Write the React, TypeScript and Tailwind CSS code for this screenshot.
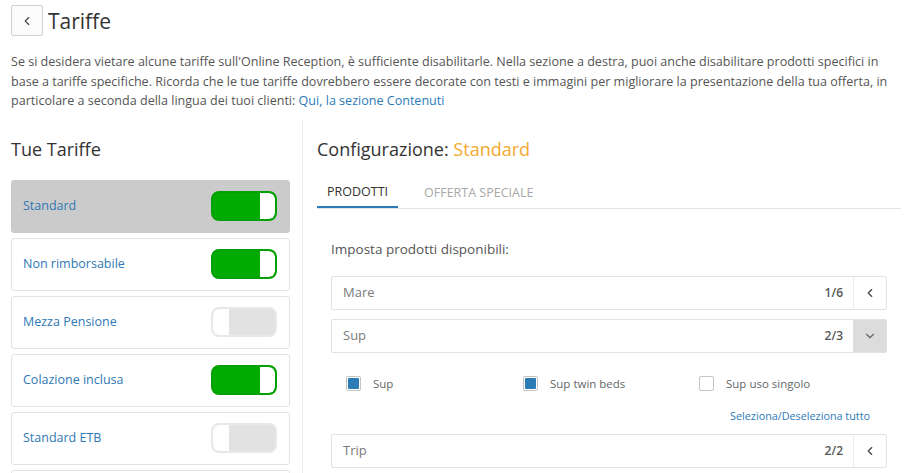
import { ChevronDown, ChevronLeft } from "lucide-react";

const rates = [
  { name: "Standard", on: true, selected: true },
  { name: "Non rimborsabile", on: true },
  { name: "Mezza Pensione", on: false },
  { name: "Colazione inclusa", on: true },
  { name: "Standard ETB", on: false },
  { name: "Standard", on: false },
];

function Toggle({ on }: { on: boolean }) {
  return on ? (
    <span className="flex h-[30px] w-[66px] justify-end overflow-hidden rounded-[8px] border-2 border-[#05a005] bg-[#02ab02]">
      <span className="h-full w-[15px] rounded-r-[6px] bg-white" />
    </span>
  ) : (
    <span className="flex h-[30px] w-[66px] overflow-hidden rounded-[8px] border-2 border-[#e8e8e8] bg-[#e2e2e2]">
      <span className="h-full w-[16px] rounded-l-[6px] bg-white" />
    </span>
  );
}

function ProductRow({ label, count, open = false }: { label: string; count: string; open?: boolean }) {
  return (
    <div className="flex h-[34px] items-stretch rounded-[2px] border border-[#e2e2e2] bg-white">
      <span className="flex flex-1 items-center pl-[11px] text-[13px] text-[#7a7a7a]">{label}</span>
      <span className="mr-[10px] flex items-center text-[12px] font-semibold text-[#555]">{count}</span>
      <span
        className={
          open
            ? "flex w-[33px] items-center justify-center bg-[#dcdcdc] text-[#666]"
            : "flex w-[33px] items-center justify-center border-l border-[#ececec] text-[#444]"
        }
      >
        {open ? <ChevronDown size={14} strokeWidth={2} /> : <ChevronLeft size={14} strokeWidth={2} />}
      </span>
    </div>
  );
}

function Check({ label, checked }: { label: string; checked: boolean }) {
  return (
    <label className="flex items-center gap-[12px] text-[11.5px] leading-[16px] text-[#666]">
      <span className="flex h-[15px] w-[15px] items-center justify-center rounded-[2px] border border-[#c4c4c4] bg-white p-[1px]">
        {checked ? <span className="h-full w-full rounded-[1px] bg-[#2b7bb5]" /> : null}
      </span>
      {label}
    </label>
  );
}

export default function App() {
  return (
    <div
      className="h-[473px] w-[904px] overflow-hidden bg-white text-[#333]"
      style={{ fontFamily: '"Open Sans", "Liberation Sans", sans-serif' }}
    >
      <header className="flex items-center gap-[5px] pl-[11px] pt-[5px]">
        <button className="flex h-[31px] w-[32px] items-center justify-center rounded-[2px] border border-[#d0d0d0] bg-[#fbfbfb] text-[#444]">
          <ChevronLeft size={14} strokeWidth={2} />
        </button>
        <h1 className="text-[21px] leading-[30px] text-[#333]">Tariffe</h1>
      </header>

      <p className="mt-[16px] px-[11px] text-[12.55px] leading-[19.5px] text-[#555]">
        Se si desidera vietare alcune tariffe sull'Online Reception, è sufficiente disabilitarle. Nella sezione a destra,
        puoi anche disabilitare prodotti specifici in base a tariffe specifiche. Ricorda che le tue tariffe dovrebbero
        essere decorate con testi e immagini per migliorare la presentazione della tua offerta, in particolare a seconda
        della lingua dei tuoi clienti: <a className="text-[#2d7ab9]">Qui, la sezione Contenuti</a>
      </p>

      <div className="mt-[10px] flex">
        <aside className="w-[302px] shrink-0 pl-[11px] pr-[12px] pt-[16px]">
          <h2 className="h-[24px] text-[18px] leading-[24px] text-[#333]">Tue Tariffe</h2>
          <ul className="mt-[19px] grid gap-[5px]">
            {rates.map((rate, i) => (
              <li
                key={i}
                className={
                  rate.selected
                    ? "flex h-[53px] items-center justify-between rounded-[3px] border border-[#cbcbcb] bg-[#cbcbcb] pl-[11px] pr-[12px]"
                    : "flex h-[53px] items-center justify-between rounded-[3px] border border-[#e3e3e3] bg-white pl-[11px] pr-[12px]"
                }
              >
                <span className="text-[12.5px] text-[#2f78b5]">{rate.name}</span>
                <Toggle on={rate.on} />
              </li>
            ))}
          </ul>
        </aside>

        <section className="flex-1 border-l border-[#ececec] pl-[14px] pr-[3px] pt-[16px]">
          <h2 className="h-[24px] text-[18px] leading-[24px] text-[#333]">
            Configurazione: <span className="text-[#f2a92f]">Standard</span>
          </h2>

          <nav className="mt-[18px] flex border-b border-[#e3e3e3] text-[12.5px]">
            <span className="-mb-px flex h-[29px] items-center border-b-2 border-[#2d7ab9] px-[10px] text-[#333]">
              PRODOTTI
            </span>
            <span className="ml-[16px] flex h-[29px] items-center px-[10px] text-[#a8a8a8]">OFFERTA SPECIALE</span>
          </nav>

          <div className="pl-[14px] pr-[14px] pt-[31px]">
            <p className="text-[13.5px] leading-[18px] text-[#555]">Imposta prodotti disponibili:</p>

            <div className="mt-[18px] grid gap-[9px]">
              <ProductRow label="Mare" count="1/6" />
              <ProductRow label="Sup" count="2/3" open />
            </div>

            <div className="mt-[23px] grid grid-cols-[177px_176px_1fr] pl-[15px]">
              <Check label="Sup" checked />
              <Check label="Sup twin beds" checked />
              <Check label="Sup uso singolo" checked={false} />
            </div>

            <div className="mt-[16px] flex justify-end pr-[17px]">
              <a className="text-[10.8px] leading-[16px] text-[#2d7ab9]">Seleziona/Deseleziona tutto</a>
            </div>

            <div className="mt-[10px]">
              <ProductRow label="Trip" count="2/2" />
            </div>
          </div>
        </section>
      </div>
    </div>
  );
}
